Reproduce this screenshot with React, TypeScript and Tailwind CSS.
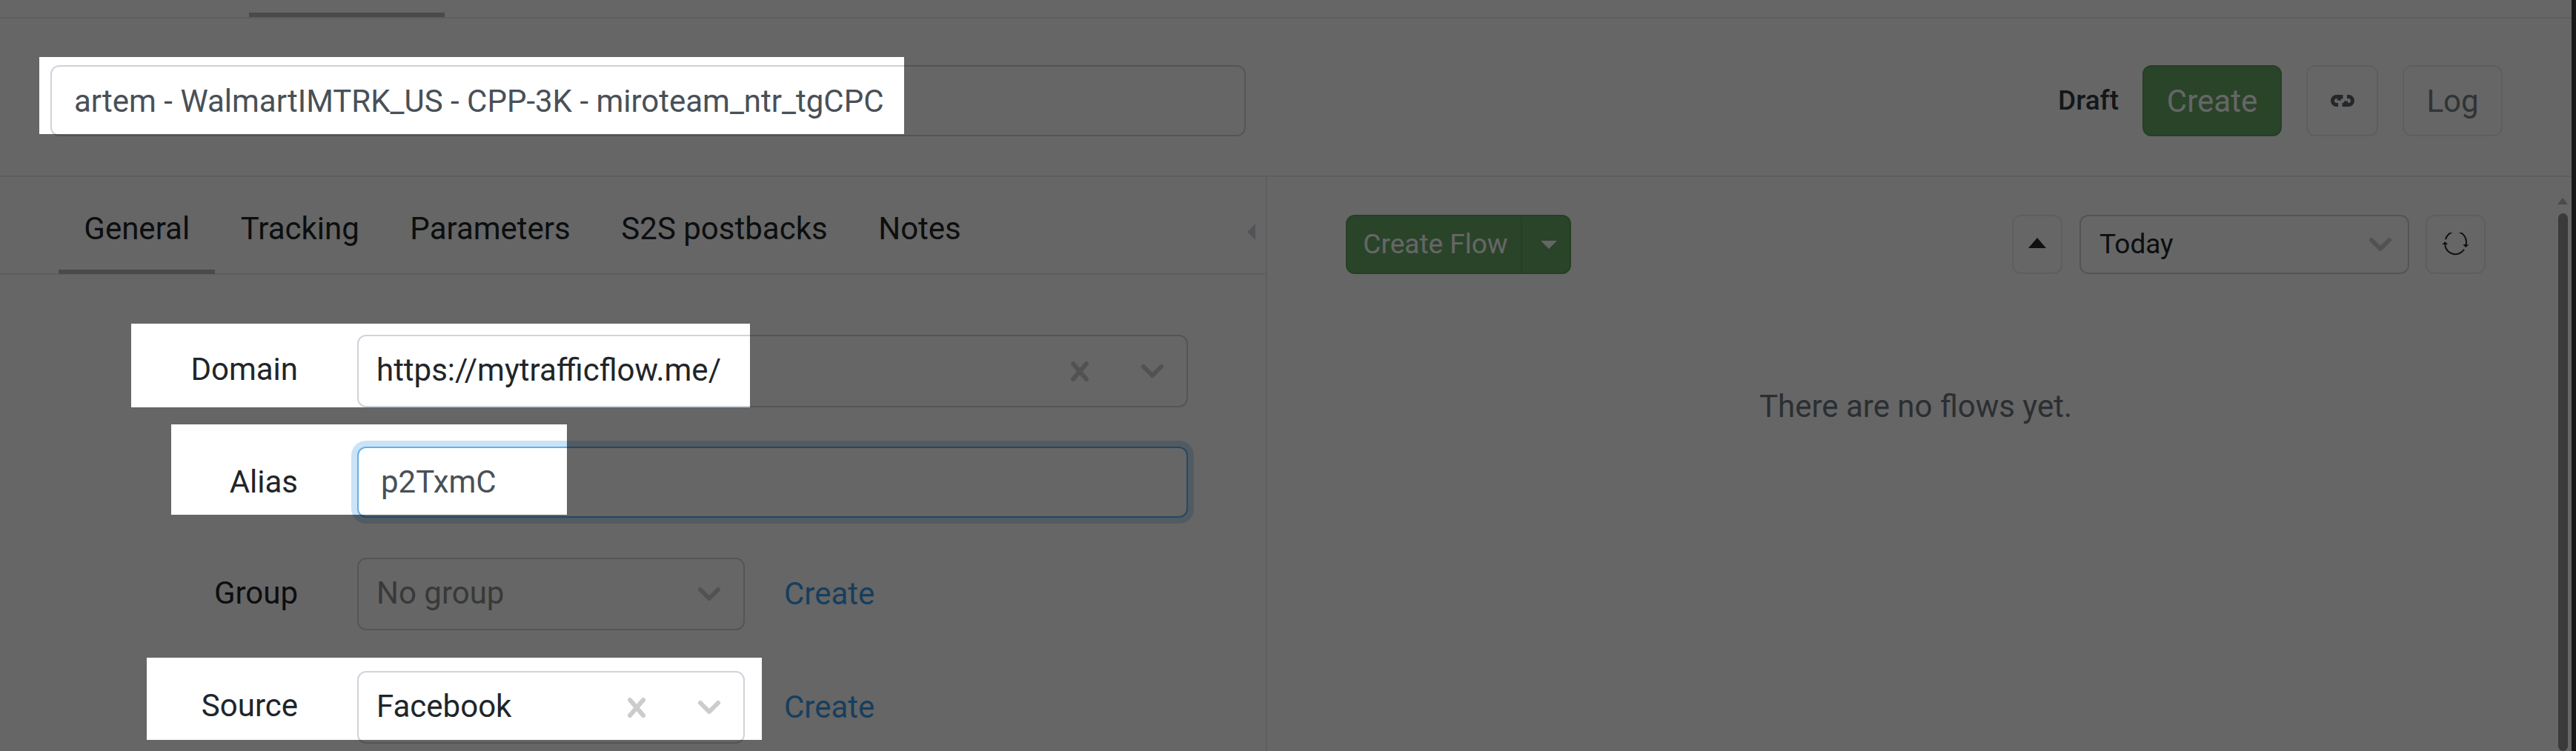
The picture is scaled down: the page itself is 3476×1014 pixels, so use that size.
import { ChevronDown } from "lucide-react";
import type { ReactNode } from "react";

const TABS = ["General", "Tracking", "Parameters", "S2S postbacks", "Notes"];

const field = "flex items-center rounded-[12px] border-2 border-[#ced4da] bg-white";
const outlineBtn =
  "flex items-center justify-center rounded-[12px] border-2 border-[#e9ecef] bg-white";

function Row({
  label,
  top,
  labelPad,
  children,
}: {
  label: string;
  top: string;
  labelPad: string;
  children: ReactNode;
}) {
  return (
    <div className={`flex items-center ${top}`}>
      <div className={`w-[402px] text-right text-[42px] text-[#212529] ${labelPad}`}>{label}</div>
      <div className="ml-[80px] flex items-center">{children}</div>
    </div>
  );
}

function Chevron() {
  return <ChevronDown className="shrink-0 text-[#cccccc]" size={48} strokeWidth={3} />;
}

function Clear() {
  return (
    <svg width="24" height="27" viewBox="0 0 24 27" className="shrink-0" stroke="#ccc" strokeWidth="6" strokeLinecap="round">
      <path d="M3 3l18 21M21 3L3 24" />
    </svg>
  );
}

export default function App() {
  return (
    <div className="relative flex h-[1014px] w-[3476px] overflow-hidden bg-white font-['Roboto',sans-serif]">
      <div className="w-[3470px]">
        <div className="h-[25px] border-b-2 border-[#e9ecef]">
          <div className="ml-[336px] h-[23px] w-[264px] border-b-[6px] border-[#b8b8b8]" />
        </div>

        <div className="flex h-[214px] items-center border-b-2 border-[#e9ecef] pl-[68px] pr-[93px] pt-[10px]">
          <div className={`${field} h-[96px] w-[1613px] pl-[30px] text-[42px] text-[#495057]`}>
            artem - WalmartIMTRK_US - CPP-3K - miroteam_ntr_tgCPC
          </div>
          <div className="ml-auto text-[37px] font-medium text-[#343a40]">Draft</div>
          <button className="ml-[32px] h-[96px] w-[188px] rounded-[12px] border-2 border-[#5e9e5e] bg-[#68aa68] text-[42px] text-white">
            Create
          </button>
          <button className={`${outlineBtn} ml-[33px] h-[96px] w-[97px]`}>
            <svg width="32" height="16" viewBox="0 0 32 16" fill="none" stroke="#5a6268" strokeWidth="5">
              <path d="M15 2.5H8a5.5 5.5 0 0 0 0 11h2" />
              <path d="M17 13.5h7a5.5 5.5 0 0 0 0-11h-2" />
              <path d="M11 7.5a5.5 5.5 0 0 1 5.5-5M21 8.5a5.5 5.5 0 0 1-5.5 5" />
            </svg>
          </button>
          <button className={`${outlineBtn} ml-[33px] h-[96px] w-[135px] text-[42px] text-[#7a8288]`}>Log</button>
        </div>

        <div className="flex h-[775px]">
          <div className="relative w-[1710px] border-r-2 border-[#eeeeee]">
            <div className="flex h-[132px] items-center border-b-2 border-[#e9ecef] pl-[79px] text-[42px] text-[#212529]">
              {TABS.map((t, i) => (
                <div
                  key={t}
                  className={`flex h-[132px] items-center border-b-[6px] px-[34.3px] pt-[14px] ${
                    i === 0 ? "border-[#b8b8b8]" : "border-transparent"
                  }`}
                >
                  {t}
                </div>
              ))}
            </div>
            <div className="absolute left-[1683px] top-[63px] h-0 w-0 border-y-[11px] border-r-[11px] border-y-transparent border-r-[#ccd0d8]" />

            <Row label="Domain" top="mt-[81px]" labelPad="pb-[5px]">
              <div className={`${field} h-[98px] w-[1121px] pl-[24px] pr-[22px] text-[42px] text-[#212529]`}>
                <span className="flex-1 pb-[3px]">https://mytrafficflow.me/</span>
                <Clear />
                <div className="ml-[62px]">
                  <Chevron />
                </div>
              </div>
            </Row>
            <Row label="Alias" top="mt-[53px]" labelPad="pb-[2px]">
              <div className="flex h-[96px] w-[1121px] items-center rounded-[12px] border-2 border-[#66afe9] bg-white pb-[2px] pl-[30px] text-[42px] text-[#495057] shadow-[0_0_0_8px_rgba(102,175,233,0.35)]">
                p2TxmC
              </div>
            </Row>
            <Row label="Group" top="mt-[54px]" labelPad="pb-[3px]">
              <div className={`${field} h-[98px] w-[523px] pl-[24px] pr-[22px] text-[42px] text-[#909090]`}>
                <span className="flex-1 pb-[3px]">No group</span>
                <Chevron />
              </div>
              <a className="ml-[53px] pb-[1px] text-[42px] text-[#3b9ce8]">Create</a>
            </Row>
            <Row label="Source" top="mt-[55px]" labelPad="pb-[5px]">
              <div className={`${field} h-[98px] w-[523px] pl-[24px] pr-[22px] text-[42px] text-[#212529]`}>
                <span className="flex-1 pb-[3px]">Facebook</span>
                <Clear />
                <div className="ml-[62px]">
                  <Chevron />
                </div>
              </div>
              <a className="ml-[53px] pb-[2px] text-[42px] text-[#3b9ce8]">Create</a>
            </Row>
          </div>

          <div className="flex-1 pl-[106px] pr-[92px]">
            <div className="mt-[51px] flex items-center">
              <div className="flex h-[80px] w-[304px] items-center rounded-[12px] border-2 border-[#5e9e5e] bg-[#68aa68] text-[37px] text-white">
                <span className="flex h-full w-[236px] items-center justify-center border-r-2 border-[#5e9e5e] pl-[4px]">Create Flow</span>
                <span className="ml-[25px] h-0 w-0 border-x-[11px] border-t-[11px] border-x-transparent border-t-white" />
              </div>
              <button className={`${outlineBtn} ml-auto h-[80px] w-[68px]`}>
                <span className="h-0 w-0 -translate-y-[2px] border-x-[12px] border-b-[14px] border-x-transparent border-b-[#2a2a2a]" />
              </button>
              <div className={`${field} ml-[23px] h-[80px] w-[445px] pl-[25px] pr-[13px] text-[37px] text-[#212529]`}>
                <span className="flex-1">Today</span>
                <Chevron />
              </div>
              <button className={`${outlineBtn} ml-[22px] h-[80px] w-[81px]`}>
                <svg width="37" height="32" viewBox="0 0 37 32" fill="none" stroke="#2a2a2a" strokeWidth="2">
                  <path d="M5 9.3A14 14 0 0 1 32.5 16" />
                  <path d="M30 22.7A14 14 0 0 1 4.2 16" />
                  <path d="M.3 16l4-3.7 4 3.7zM28.3 16h8l-4 4.3z" fill="#2a2a2a" stroke="none" />
                </svg>
              </button>
            </div>
            <p className="mt-[147px] text-center text-[42px] text-[#6c757d]">There are no flows yet.</p>
          </div>

          <div className="flex w-[24px] flex-col items-center pt-[28px]">
            <span className="h-0 w-0 border-x-[7px] border-b-[9px] border-x-transparent border-b-[#b9b9b9]" />
            <div className="mt-[12px] h-full w-[13px] rounded-full bg-[#919191]" />
          </div>
        </div>
      </div>
      <div className="w-[6px] bg-[#3c3c3c]" />

      <div className="absolute inset-0 bg-black/60 [clip-path:path(evenodd,'M0_0H3476V1014H0Z_M53_77H1220V181H53Z_M177_437H1012V550H177Z_M231_573H765V695H231Z_M198_888H1028V999H198Z')]" />
    </div>
  );
}
